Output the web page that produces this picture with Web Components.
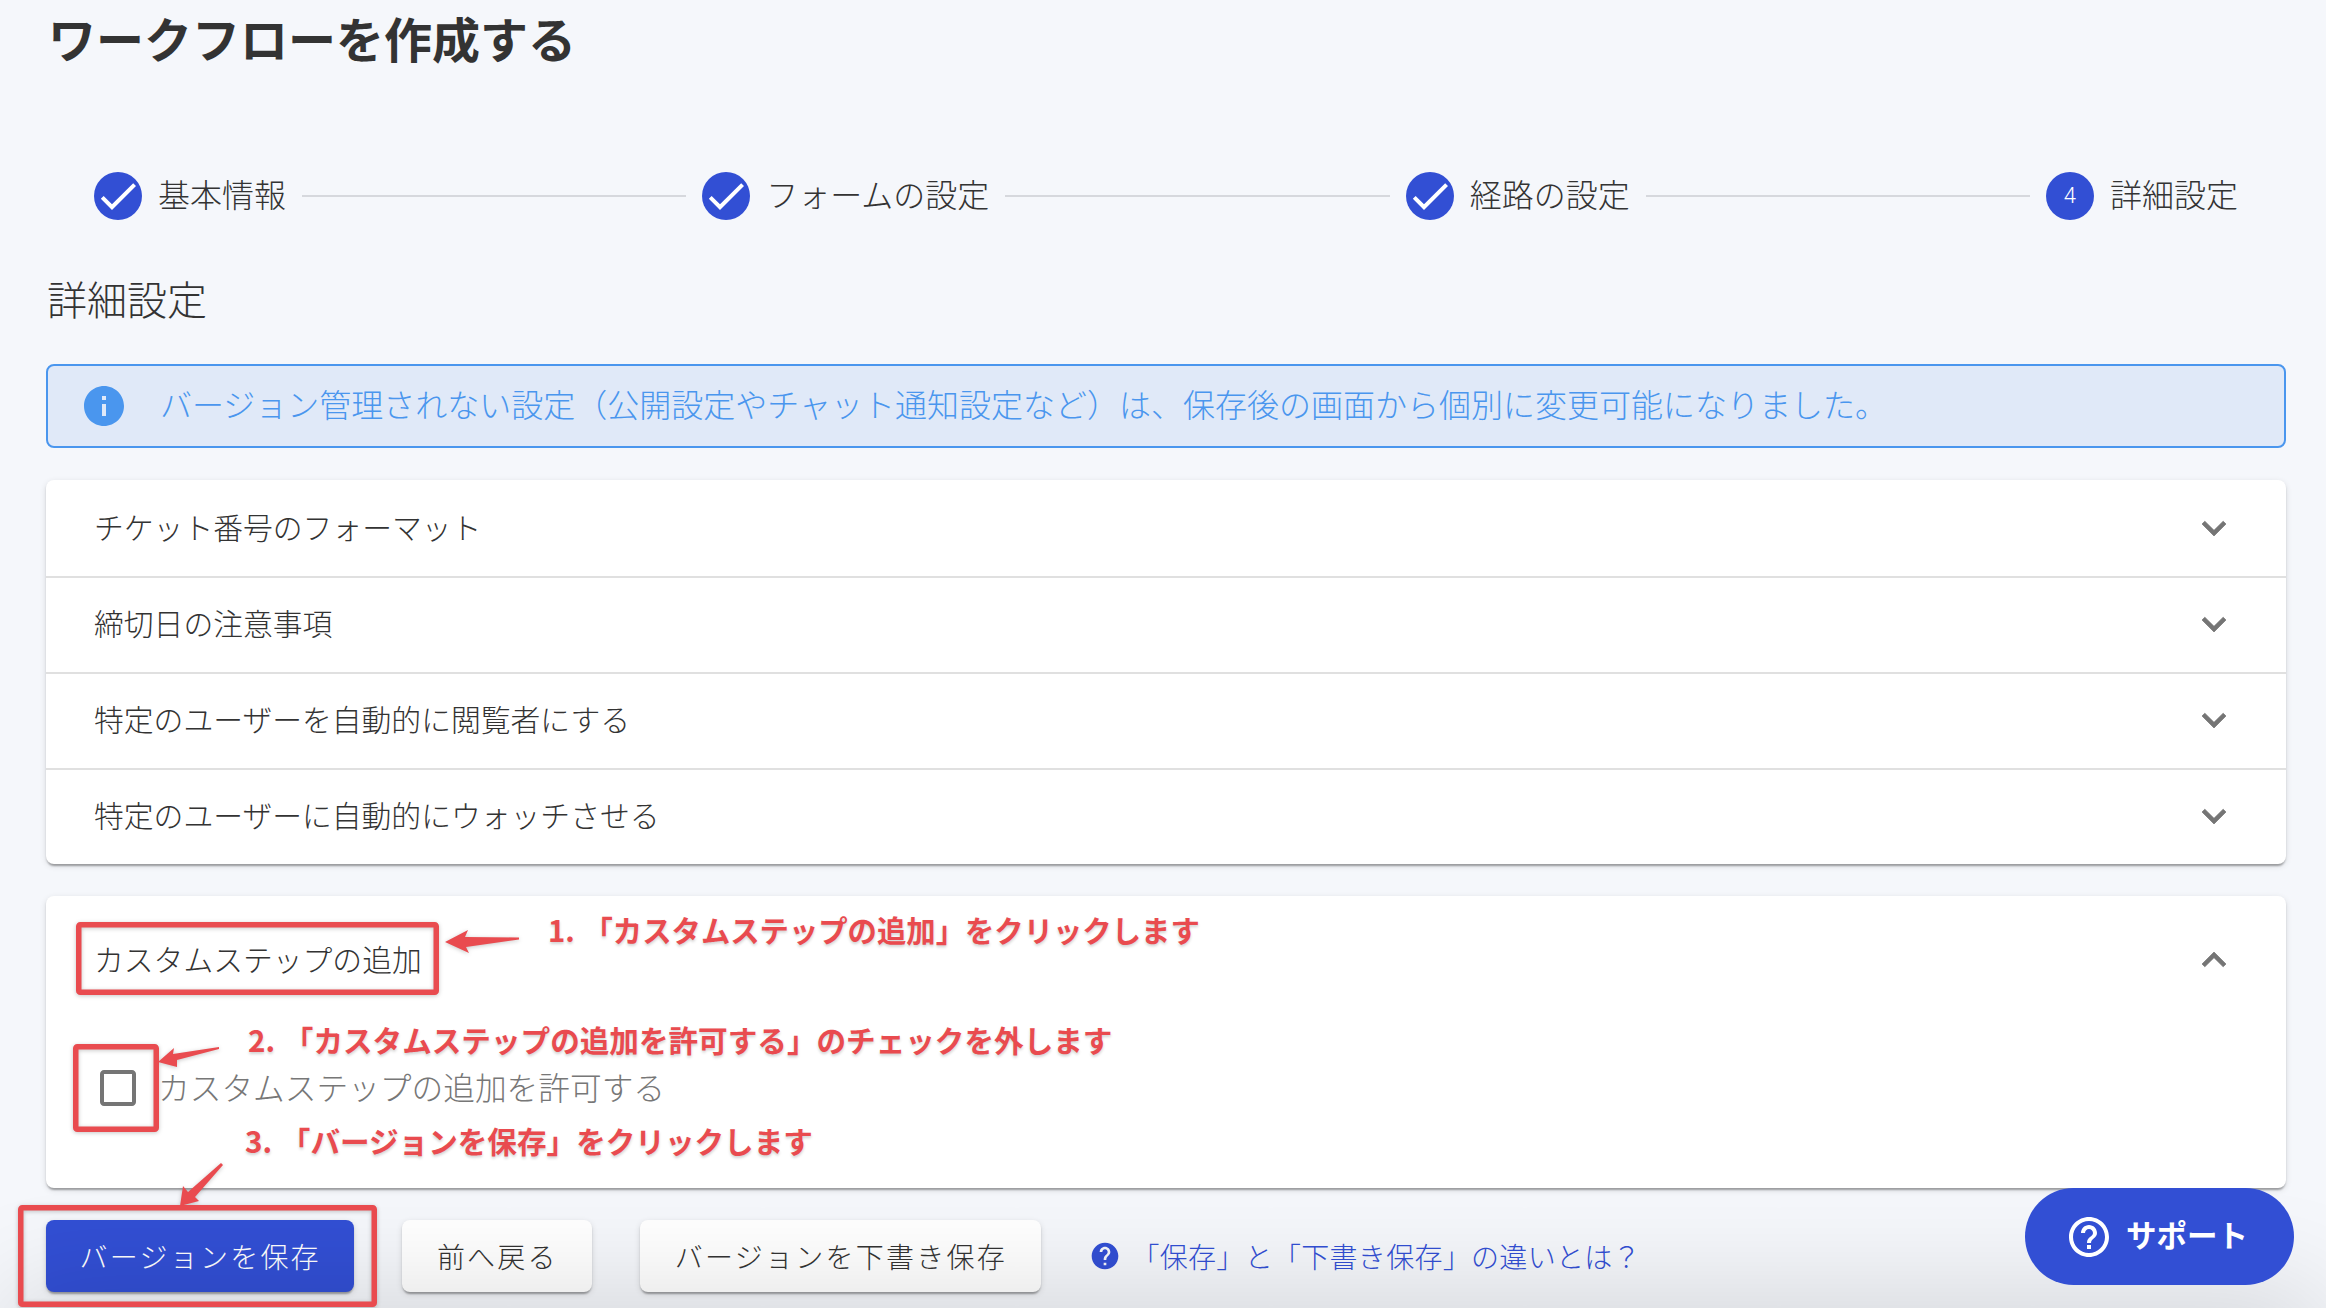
<!DOCTYPE html>
<html lang="ja">
<head>
<meta charset="utf-8">
<title>ワークフローを作成する</title>
<style>
  html, body { margin: 0; padding: 0; background: #f5f7fb; }
  body { font-family: "Noto Sans CJK JP", "Noto Sans", sans-serif; color: #333; font-weight: 300; }
</style>
</head>
<body>
<wf-page>
  <wf-title>ワークフローを作成する</wf-title>
  <wf-stepper>
    <wf-step done>基本情報</wf-step>
    <wf-step done>フォームの設定</wf-step>
    <wf-step done>経路の設定</wf-step>
    <wf-step num="4" last>詳細設定</wf-step>
  </wf-stepper>
  <wf-heading>詳細設定</wf-heading>
  <wf-alert>バージョン管理されない設定（公開設定やチャット通知設定など）は、保存後の画面から個別に変更可能になりました。</wf-alert>
  <wf-card>
    <wf-acc-row>チケット番号のフォーマット</wf-acc-row>
    <wf-acc-row divider>締切日の注意事項</wf-acc-row>
    <wf-acc-row divider>特定のユーザーを自動的に閲覧者にする</wf-acc-row>
    <wf-acc-row divider>特定のユーザーに自動的にウォッチさせる</wf-acc-row>
  </wf-card>
  <wf-card second>
    <wf-acc-row open tall>カスタムステップの追加</wf-acc-row>
    <wf-checkbox>カスタムステップの追加を許可する</wf-checkbox>
  </wf-card>
  <wf-footer>
    <wf-button primary>バージョンを保存</wf-button>
    <wf-button>前へ戻る</wf-button>
    <wf-button>バージョンを下書き保存</wf-button>
    <wf-help-link>「保存」と「下書き保存」の違いとは？</wf-help-link>
  </wf-footer>
  <wf-fade></wf-fade>
  <wf-annotations>
    <wf-note x="548" y="907" size="29.35">1. 「カスタムステップの追加」をクリックします</wf-note>
    <wf-note x="248" y="1018">2. 「カスタムステップの追加を許可する」のチェックを外します</wf-note>
    <wf-note x="245" y="1119">3. 「バージョンを保存」をクリックします</wf-note>
  </wf-annotations>
  <wf-support>サポート</wf-support>
</wf-page>

<script>
const PATHS = {
  check: 'M9 16.17 4.83 12l-1.42 1.41L9 19 21 7l-1.41-1.41z',
  info: 'M12 2C6.48 2 2 6.48 2 12s4.48 10 10 10 10-4.48 10-10S17.52 2 12 2zm1 15h-2v-6h2v6zm0-8h-2V7h2v2z',
  down: 'M16.59 8.59 12 13.17 7.41 8.59 6 10l6 6 6-6z',
  up: 'M12 8l-6 6 1.41 1.41L12 10.83l4.59 4.58L18 14z',
  box: 'M19 5v14H5V5h14m0-2H5c-1.1 0-2 .9-2 2v14c0 1.1.9 2 2 2h14c1.1 0 2-.9 2-2V5c0-1.1-.9-2-2-2z',
  help: 'M12 2C6.48 2 2 6.48 2 12s4.48 10 10 10 10-4.48 10-10S17.52 2 12 2zm1 17h-2v-2h2v2zm2.07-7.75-.9.92C13.45 12.9 13 13.5 13 15h-2v-.5c0-1.1.45-2.1 1.17-2.83l1.24-1.26c.37-.36.59-.86.59-1.41 0-1.1-.9-2-2-2s-2 .9-2 2H8c0-2.21 1.79-4 4-4s4 1.79 4 4c0 .88-.36 1.68-.93 2.25z',
  helpOutline: 'M11 18h2v-2h-2v2zm1-16C6.48 2 2 6.48 2 12s4.48 10 10 10 10-4.48 10-10S17.52 2 12 2zm0 18c-4.41 0-8-3.59-8-8s3.59-8 8-8 8 3.59 8 8-3.59 8-8 8zm0-14c-2.21 0-4 1.79-4 4h2c0-1.1.9-2 2-2s2 .9 2 2c0 2-3 1.75-3 5h2c0-2.25 3-2.5 3-5 0-2.21-1.79-4-4-4z'
};
const icon = (name, size, fill, extra = '') =>
  `<svg width="${size}" height="${size}" viewBox="0 0 24 24" fill="${fill}" ${extra} style="display:block;flex:none"><path d="${PATHS[name]}"/></svg>`;
const SHADOW = '0 4px 2px -2px rgba(0,0,0,.2), 0 2px 2px 0 rgba(0,0,0,.14), 0 2px 6px 0 rgba(0,0,0,.12)';
const BLUE = '#324fd4';

function define(tag, render) {
  customElements.define(tag, class extends HTMLElement {
    connectedCallback() {
      if (this.shadowRoot) return;
      this.attachShadow({ mode: 'open' }).innerHTML = render(this);
    }
  });
}

define('wf-page', () => `<style>
  :host { display:block; position:relative; width:2326px; height:1308px; overflow:hidden;
    box-sizing:border-box; padding:1px 40px 0 46px; background:#f5f7fb; }
</style><slot></slot>`);

define('wf-title', () => `<style>
  :host { display:block; padding-left:2px; font-size:48px; line-height:72px; font-weight:700; color:#333; margin-bottom:99px; }
</style><slot></slot>`);

define('wf-stepper', () => `<style>
  :host { display:flex; align-items:center; gap:16px; height:48px; padding:0 48px; margin-bottom:50px; }
</style><slot></slot>`);

define('wf-step', el => {
  const badge = el.hasAttribute('done')
    ? `<div class="dot">${icon('check', 48, '#fff')}</div>`
    : `<div class="dot num">${el.getAttribute('num')}</div>`;
  const line = el.hasAttribute('last') ? '' : '<div class="line"></div>';
  return `<style>
    :host { display:flex; align-items:center; gap:16px; flex:${el.hasAttribute('last') ? '0 0 auto' : '1 1 auto'}; }
    .dot { width:48px; height:48px; border-radius:50%; background:${BLUE}; flex:none; display:flex; align-items:center; justify-content:center; }
    .num { color:#fff; font:300 22px/48px Roboto, "Liberation Sans", sans-serif; }
    .label { font-size:32px; line-height:48px; color:#333; white-space:nowrap; padding-bottom:7px; }
    .line { flex:1; height:2px; background:#d6d8dd; }
  </style>${badge}<span class="label"><slot></slot></span>${line}`;
});

define('wf-heading', () => `<style>
  :host { display:block; padding-left:1px; font-size:40px; line-height:56px; color:#333; margin-bottom:38px; }
</style><slot></slot>`);

define('wf-alert', () => `<style>
  :host { display:flex; align-items:center; gap:32px; box-sizing:border-box; height:84px; padding:0 32px;
    border:2px solid #4a96ee; border-radius:8px; background:#e0e9f8; color:#4a96ee;
    font-size:32px; line-height:48px; margin-bottom:32px; }
  span { padding-bottom:7px; }
</style>${icon('info', 48, '#4a96ee')}<span><slot></slot></span>`);

define('wf-card', el => `<style>
  :host { display:block; background:#fff; border-radius:8px; box-shadow:${SHADOW}; margin-bottom:32px; }
</style><slot></slot>`);

define('wf-acc-row', el => {
  const open = el.hasAttribute('open');
  return `<style>
    :host { display:flex; align-items:center; justify-content:space-between; box-sizing:border-box;
      height:${el.hasAttribute('tall') ? 128 : 96}px; padding:0 48px; font-size:29.8px; color:#333;
      ${el.hasAttribute('divider') ? 'box-shadow:inset 0 2px 0 #e0e0e0;' : ''} }
    span { padding-bottom:5px; }
  </style><span><slot></slot></span>${icon(open ? 'up' : 'down', 48, '#757575', 'stroke="#757575" stroke-width=".35"')}`;
});

define('wf-checkbox', () => `<style>
  :host { display:flex; align-items:center; gap:16px; height:48px; padding:40px 48px 76px; font-size:31.7px; color:#777; }
  span { padding-bottom:5px; }
</style>${icon('box', 48, '#757575')}<span><slot></slot></span>`);

define('wf-footer', () => `<style>
  :host { display:flex; align-items:center; gap:48px; height:72px; }
</style><slot></slot>`);

define('wf-button', el => {
  const p = el.hasAttribute('primary');
  return `<style>
    :host { display:flex; align-items:center; justify-content:center; box-sizing:border-box; height:72px; padding:0 ${p ? 33.5 : 34.5}px;
      border-radius:8px; font-size:28px; letter-spacing:.08em; white-space:nowrap;
      background:${p ? BLUE : '#fff'}; color:${p ? '#fff' : '#333'}; box-shadow:${SHADOW}; }
  </style><slot></slot>`;
});

define('wf-help-link', () => `<style>
  :host { display:flex; align-items:center; gap:10px; color:${BLUE}; font-size:28px; letter-spacing:.3px; white-space:nowrap; }
</style>${icon('help', 32, BLUE)}<span><slot></slot></span>`);

define('wf-fade', () => `<style>
  :host { display:block; position:absolute; left:46px; right:40px; top:1340px; height:60px;
    box-shadow:0 -10px 110px 40px rgba(0,0,0,.13); pointer-events:none; }
</style>`);

define('wf-annotations', () => `<style>
  :host { display:block; position:absolute; inset:0; pointer-events:none; }
  svg { position:absolute; left:0; top:0; filter:drop-shadow(0 1px 2px rgba(0,0,0,.22)); }
</style>
<svg width="2326" height="1308" viewBox="0 0 2326 1308" fill="none">
  <g stroke="#e94b4f" stroke-width="5.5" stroke-linejoin="round">
    <rect x="78.75" y="924.75" width="357.5" height="67.5" rx="1.5"/>
    <rect x="75.75" y="1046.75" width="80.5" height="82.5" rx="1.5"/>
    <rect x="20.75" y="1207.75" width="353.5" height="96.5" rx="1.5"/>
  </g>
  <g fill="#e94b4f">
    <polygon points="445,942 468,930 465,937 519,937.5 519,939.5 466,947 469,953"/>
    <polygon points="158,1062 174,1048 173,1054 219,1047 219,1049 177,1060 177,1067"/>
    <polygon points="180,1206 183,1186 188,1192 221,1163 223,1165 195,1197 199,1201"/>
  </g>
</svg><slot></slot>`);

define('wf-note', el => `<style>
  :host { position:absolute; left:${el.getAttribute('x')}px; top:${el.getAttribute('y')}px;
    font-size:${el.getAttribute('size') || 29.6}px; line-height:44px; font-weight:700; color:#e94b4f; white-space:nowrap; word-spacing:2px;
    text-shadow:0 2px 3px rgba(0,0,0,.18); }
</style><slot></slot>`);

define('wf-support', () => `<style>
  :host { position:absolute; left:2025px; top:1188px; box-sizing:border-box; width:269px; height:97px;
    display:flex; align-items:center; gap:13px; padding-left:40px; border-radius:49px;
    background:${BLUE}; color:#fff; font-size:30.5px; font-weight:700; }
  span { padding-bottom:5px; }
</style>${icon('helpOutline', 48, '#fff')}<span><slot></slot></span>`);
</script>
</body>
</html>
